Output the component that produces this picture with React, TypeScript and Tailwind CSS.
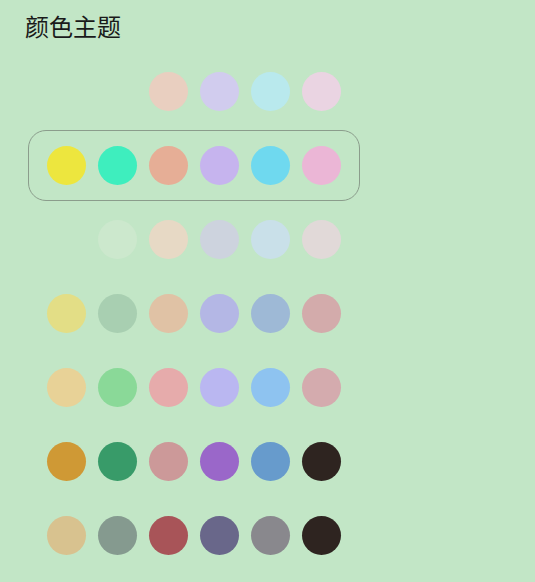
import React from 'react';

const rows: (string | null)[][] = [
  [null, null, '#e9cfc0', '#d1ccee', '#b9e9ed', '#ead4e2'],
  ['#ede63e', '#3eeebe', '#e6ae96', '#c6b4ee', '#6fd9ef', '#ebb6d6'],
  [null, '#cce8cd', '#e7d9c5', '#cdd3de', '#c9e0e9', '#e1d9d8'],
  ['#e3de86', '#a8cfb1', '#e0c2a5', '#b4b7e5', '#9eb9d6', '#d3abab'],
  ['#e8d297', '#8ad998', '#e6abab', '#bab7f1', '#8ec3f0', '#d4abae'],
  ['#cf9935', '#389b69', '#cc9999', '#9a67c9', '#679bcc', '#2e2420'],
  ['#d8c28f', '#859a8f', '#a85458', '#69678a', '#89888d', '#2e2420'],
];

export default function App() {
  const selected = 1;

  return (
    <div className="min-h-screen w-full bg-[#c2e6c6]" style={{ fontFamily: '"Noto Sans CJK SC", "Noto Sans", sans-serif' }}>
      {/* Title */}
      <h1 className="pl-[25px] pt-2 text-[24px] leading-9 text-[#1a1a1a]">颜色主题</h1>

      {/* Theme rows */}
      <div className="mt-3 ml-[28px] w-[332px] flex flex-col gap-[3px]">
        {rows.map((row, i) => (
          <div
            key={i}
            className={
              'h-[71px] rounded-[18px] border px-[18px] flex items-center gap-3 ' +
              (i === selected ? 'border-[#8b9d8c]' : 'border-transparent')
            }
          >
            {row.map((c, j) => (
              <span
                key={j}
                className="w-[39px] h-[39px] rounded-full shrink-0"
                style={{ backgroundColor: c ?? 'transparent' }}
              />
            ))}
          </div>
        ))}
      </div>
    </div>
  );
}
